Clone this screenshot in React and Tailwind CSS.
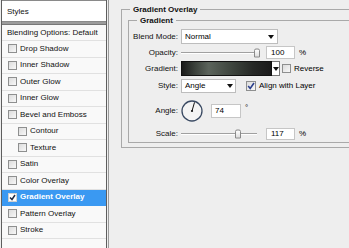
import React from 'react'

const font = { fontFamily: '"Liberation Sans", Arial, sans-serif' }

const Arrow = () => (
  <svg width="6" height="4" viewBox="0 0 6 4">
    <path d="M0 0 H6 L3 4 Z" fill="#111" />
  </svg>
)

const Box = ({ checked, light }) => (
  <span
    className={`shrink-0 flex items-center justify-center w-[9px] h-[9px] border ${
      light ? 'border-[#d0d0d0] bg-white' : 'border-[#8e8f8f] bg-gradient-to-br from-[#dcdcdc] to-[#f8f8f8]'
    }`}
  >
    {checked && (
      <svg width="7" height="7" viewBox="0 0 7 7">
        <path d="M1 3.5 L3 5.5 L6 1" stroke="#1f2a44" strokeWidth="1.5" fill="none" />
      </svg>
    )}
  </span>
)

const styles = [
  { name: 'Drop Shadow' },
  { name: 'Inner Shadow' },
  { name: 'Outer Glow' },
  { name: 'Inner Glow' },
  { name: 'Bevel and Emboss' },
  { name: 'Contour', sub: true },
  { name: 'Texture', sub: true },
  { name: 'Satin' },
  { name: 'Color Overlay' },
  { name: 'Gradient Overlay', active: true },
  { name: 'Pattern Overlay' },
  { name: 'Stroke' },
]

const Slider = ({ width, thumb }) => (
  <div className={`relative h-full flex items-center shrink-0 ${width}`}>
    <div className="w-full h-[2px] border-t border-[#a0a0a0] border-b border-b-white" />
    <span
      className="absolute top-1/2 -translate-y-1/2 w-[6px] h-[9px] rounded-t-[2px] border border-[#8a8a8a] bg-gradient-to-b from-white to-[#dedede]"
      style={{ left: thumb }}
    />
  </div>
)

const Label = ({ children }) => (
  <span className="w-[49px] text-right text-[#111] shrink-0">{children}</span>
)

export default function App() {
  return (
    <div className="w-[349px] h-[248px] overflow-hidden bg-[#eeeeee] flex text-[8px] leading-[10px] whitespace-nowrap" style={font}>
      {/* left list */}
      <div className="ml-[1px] shrink-0 h-full pr-[1px] border-r border-[#9a9a9a]">
        <div className="w-[106px] h-full flex flex-col border-l border-r border-[#5e5e5e] bg-[#f9f9f9]">
          <div className="h-[22px] shrink-0 flex items-center pt-[2px] pl-[5px] bg-white border-t border-b border-[#8a8a8a] text-[#111]">
            Styles
          </div>
          <div className="h-[3px] shrink-0 bg-[#9c9c9c] border-b border-[#777]" />
          <div className="h-[16px] shrink-0 flex items-center pl-[5px] border-b border-[#e1e1e1] text-[#111]">
            Blending Options: Default
          </div>
          {styles.map((s) => (
            <div
              key={s.name}
              className={`h-[16.5px] shrink-0 flex items-center gap-[3px] border-b ${
                s.active ? 'bg-[#3a99f2] border-[#3a99f2] text-white font-bold' : 'border-[#e1e1e1] text-[#111]'
              } ${s.sub ? 'pl-[16px]' : 'pl-[6px]'}`}
            >
              <Box checked={s.active} light={s.active} />
              <span>{s.name}</span>
            </div>
          ))}
        </div>
      </div>

      {/* right */}
      <div className="flex-1 min-w-0 pl-[12px]">
        <fieldset className="mt-[4px] w-[280px] border border-[#a9a9a9] pb-[4px]">
          <legend className="ml-[8px] px-[3px] h-[11px] leading-[11px] font-bold text-[#111]">Gradient Overlay</legend>
          <fieldset className="ml-[6px] w-[270px] border border-[#a9a9a9] pb-[3px]">
            <legend className="ml-[8px] px-[3px] h-[11px] leading-[11px] font-bold text-[#111]">Gradient</legend>
            <div className="mt-[3px] flex flex-col">
              {/* blend mode */}
              <div className="h-[15px] flex items-center gap-[3px]">
                <Label>Blend Mode:</Label>
                <div className="w-[97px] h-full bg-white border border-[#bdbdbd] flex items-center justify-between pl-[3px] pr-[3px]">
                  <span>Normal</span>
                  <Arrow />
                </div>
              </div>
              {/* opacity */}
              <div className="mt-[2px] h-[13px] flex items-center gap-[3px]">
                <Label>Opacity:</Label>
                <Slider width="w-[79px]" thumb="73px" />
                <div className="ml-[3px] w-[29px] h-full bg-white border border-[#c6c6c6] flex items-center pl-[4px]">100</div>
                <span className="ml-[1px]">%</span>
              </div>
              {/* gradient */}
              <div className="mt-[2px] h-[15px] flex items-center gap-[3px]">
                <Label>Gradient:</Label>
                <div className="flex h-full">
                  <div className="w-[91px] h-full border border-[#111] bg-[linear-gradient(90deg,#1a1b1a_0%,#3c423c_15%,#5b635b_30%,#3f463f_55%,#262826_80%,#1b1b1b_100%)]" />
                  <div className="w-[8px] h-full bg-white border border-l-0 border-[#777] flex items-center justify-center">
                    <Arrow />
                  </div>
                </div>
                <div className="-ml-[1px] flex items-center gap-[3px]">
                  <Box />
                  <span>Reverse</span>
                </div>
              </div>
              {/* style */}
              <div className="mt-[3px] h-[14px] flex items-center gap-[3px]">
                <Label>Style:</Label>
                <div className="w-[55px] h-full bg-white border border-[#bdbdbd] flex items-center justify-between pl-[3px] pr-[2px]">
                  <span>Angle</span>
                  <Arrow />
                </div>
                <div className="ml-[7px] flex items-center gap-[3px]">
                  <span className="flex items-center justify-center w-[10px] h-[10px] border border-[#8e8f8f] bg-gradient-to-br from-[#dcdcdc] to-[#f8f8f8]">
                    <svg width="8" height="8" viewBox="0 0 8 8">
                      <path d="M1.2 4 L3.2 6.4 L7 1" stroke="#2b3f8c" strokeWidth="1.6" fill="none" />
                    </svg>
                  </span>
                  <span>Align with Layer</span>
                </div>
              </div>
              {/* angle */}
              <div className="mt-[7px] h-[22px] flex items-center gap-[3px]">
                <Label>Angle:</Label>
                <svg width="22" height="22" viewBox="0 0 22 22" className="shrink-0">
                  <circle cx="11" cy="11" r="10" fill="#f4f4f4" stroke="#3a4a63" strokeWidth="1.3" />
                  <line x1="11" y1="11" x2="13.5" y2="2.4" stroke="#111" strokeWidth="1" />
                  <circle cx="11" cy="11" r="1.1" fill="#111" />
                </svg>
                <div className="ml-[5px] w-[30px] h-[14px] bg-white border border-[#c6c6c6] flex items-center pl-[3px]">74</div>
                <span className="self-start mt-[3px] ml-[1px]">°</span>
              </div>
              {/* scale */}
              <div className="mt-[6px] h-[11px] flex items-center gap-[3px]">
                <Label>Scale:</Label>
                <Slider width="w-[76px]" thumb="54px" />
                <div className="ml-[6px] w-[29px] h-[12px] bg-white border border-[#c6c6c6] flex items-center pl-[4px]">117</div>
                <span className="ml-[1px]">%</span>
              </div>
            </div>
          </fieldset>
        </fieldset>
      </div>
    </div>
  )
}
